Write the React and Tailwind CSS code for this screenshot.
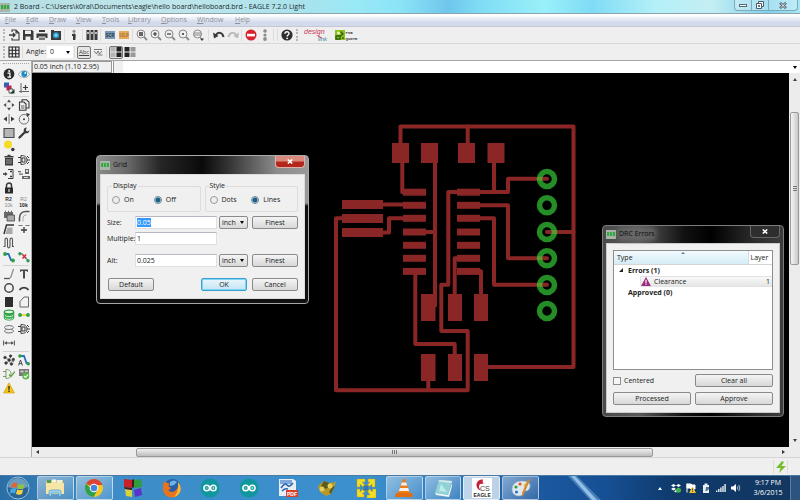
import { useEffect, useRef, useState } from 'react';

const INK = '#3a3a3a';
const LEAF = '#2f9e44';

// every glyph below is drawn on a 12 x 12 grid
const GLYPHS = {
  export: (
    <g fill="none" stroke={INK} strokeWidth="1.1">
      <path d="M4 3V1h4l3 3v7H4V9M8 1v3h3" />
      <path d="M1 6h6M5 4l2 2-2 2" strokeWidth="1.3" />
    </g>
  ),
  save: (
    <g>
      <path d="M1 1h9l1.5 1.5V11H1z" fill={INK} />
      <path d="M3 1.5h6v3.5H3zM3.5 7.5h5V11h-5z" fill="#eee" />
    </g>
  ),
  print: (
    <g fill={INK}>
      <path d="M3 1h6v2H3zM0.5 4.5h11V9h-2V7.5h-7V9h-2z" />
      <path d="M3 8.5h6V11H3z" fill="#777" />
    </g>
  ),
  camera: (
    <g>
      <path d="M1 2h10v9H1z" fill={INK} />
      <path d="M1 1h3v1H1z" fill={INK} />
      <circle cx="6" cy="6.3" r="3" fill="#2aa5dc" />
      <circle cx="6" cy="6.3" r="1.3" fill="#8fd8f5" />
    </g>
  ),
  switchBoard: (
    <g fill={INK}>
      <circle cx="6" cy="2.2" r="1.5" fill="#888" />
      <path d="M4 5l3-.5.8 1.5-.5 5H5V7H4z" />
    </g>
  ),
  books: (
    <g fill={INK}>
      <path d="M.5 1h3v10h-3zM4.5 1h3v10h-3zM8.5 1h3v10h-3z" />
      <path d="M1.3 3h1.4v2H1.3zM5.3 3h1.4v2H5.3zM9.3 3h1.4v2H9.3z" fill="#eee" />
    </g>
  ),
  zoomFit: (
    <g fill="none" stroke="#8a8a8a">
      <circle cx="5" cy="5" r="4" />
      <path d="M3 4h4M3 6h4" stroke={INK} strokeWidth="1.4" />
      <path d="M8 8l3 3" strokeWidth="1.8" />
    </g>
  ),
  zoomIn: (
    <g fill="none" stroke="#8a8a8a">
      <circle cx="5" cy="5" r="4" />
      <path d="M3 5h4M5 3v4" stroke={INK} strokeWidth="1.2" />
      <path d="M8 8l3 3" strokeWidth="1.8" />
    </g>
  ),
  zoomOut: (
    <g fill="none" stroke="#8a8a8a">
      <circle cx="5" cy="5" r="4" />
      <path d="M3 5h4" stroke={INK} strokeWidth="1.2" />
      <path d="M8 8l3 3" strokeWidth="1.8" />
    </g>
  ),
  zoomRedraw: (
    <g fill="none" stroke="#8a8a8a">
      <circle cx="5" cy="5" r="4" />
      <circle cx="5" cy="5" r="1.1" fill={INK} stroke="none" />
      <path d="M8 8l3 3" strokeWidth="1.8" />
    </g>
  ),
  zoomSelect: (
    <g fill="none" stroke="#8a8a8a">
      <circle cx="5.5" cy="5" r="4" />
      <path d="M2 4h7M2 6h7M8 8l2 2" />
      <path d="M8 9.5h4L10 12z" fill={INK} stroke="none" />
    </g>
  ),
  undo: (
    <g>
      <path d="M2.5 6.5C5 2.5 9.5 3 10.5 8" fill="none" stroke={INK} strokeWidth="2" />
      <path d="M0 3.5l1 6 4.5-2.5z" fill={INK} />
    </g>
  ),
  redo: (
    <g>
      <path d="M9.5 6.5C7 2.5 2.5 3 1.5 8" fill="none" stroke="#b9b9b9" strokeWidth="2" />
      <path d="M12 3.5l-1 6-4.5-2.5z" fill="#b9b9b9" />
    </g>
  ),
  stop: (
    <g>
      <circle cx="6" cy="6" r="5.5" fill="#d8232f" />
      <path d="M2 4.8h8v2.6H2z" fill="#fff" />
    </g>
  ),
  traffic: (
    <g fill="#8c8c8c">
      <circle cx="6" cy="2" r="1.8" />
      <circle cx="6" cy="6" r="1.6" />
      <circle cx="6" cy="10" r="1.9" />
    </g>
  ),
  help: (
    <g>
      <circle cx="6" cy="6" r="5.6" fill="#2f2f2f" />
      <path d="M4 4.8C4 2 8.2 2.2 8 4.6 8 6 6.1 6 6.1 7.4" fill="none" stroke="#fff" strokeWidth="1.4" />
      <circle cx="6.1" cy="9.3" r=".9" fill="#fff" />
    </g>
  ),
  info: (
    <g>
      <circle cx="6" cy="6" r="5.4" fill="#2b2b2b" />
      <path d="M4.5 5.2h2.4V9h1M4.5 9.2H8" fill="none" stroke="#fff" strokeWidth="1.2" />
      <circle cx="6.2" cy="2.9" r="1" fill="#fff" />
    </g>
  ),
  eye: (
    <g>
      <path d="M.5 6.5C3 1.5 9.500 1.500 11.500 6.500 9 10.500 3 10.500 .5 6.500z" fill="#fff" stroke="#8d9aa3" strokeWidth=".9" />
      <circle cx="6.3" cy="6" r="3" fill="#1e8cc4" />
      <circle cx="7.3" cy="5" r="1" fill="#d8f1ff" />
    </g>
  ),
  layers: (
    <g>
      <path d="M1 .5h5v5H1z" fill="#2f62b5" />
      <path d="M3.5 3.5h5v5h-5z" fill="#c02552" />
      <path d="M6 7h4v4H6z" fill="#eee" stroke={INK} strokeWidth=".8" />
      <path d="M11.5 7v4.5H7z" fill="#20402a" />
    </g>
  ),
  mark: (
    <g fill="none" stroke="#666">
      <path d="M3 1v10M1 9.5h10" />
      <path d="M7.5 3v5M5 5.5h5" stroke={INK} strokeWidth="1.2" />
    </g>
  ),
  move: (
    <path d="M6 0.5l2 2.700H4zM6 11.500l2-2.700H4zM.5 6l2.700-2v4zM11.500 6L8.800 4v4z" fill="#4a4a4a" />
  ),
  copy: (
    <g fill="#eee" stroke={INK} strokeWidth="1.1">
      <path d="M4 .8h4.500L11 3v6H4z" />
      <path d="M1.5 3H6l2 2v6.200H1.500z" />
      <path d="M3 7h3.500M3 9h3.500" strokeWidth=".8" />
    </g>
  ),
  mirror: (
    <g fill={INK}>
      <path d="M.5 6L4 3.500v5zM11.500 6L8 3.500v5z" />
      <path d="M5.600 1h.9v10h-.9z" fill="#666" />
    </g>
  ),
  rotate: (
    <g>
      <circle cx="6" cy="6.3" r="4.800" fill="none" stroke="#666" strokeWidth=".9" />
      <circle cx="6" cy="6.3" r="1" fill={INK} />
      <path d="M8 0l4 1-2.500 3z" fill={INK} />
    </g>
  ),
  group: <path d="M1 1.500h10v9H1z" fill="#b5b5b5" stroke="#4a4a4a" strokeWidth="1.100" />,
  wrench: (
    <g>
      <path d="M1.500 10.500L7 5" stroke={INK} strokeWidth="2.400" strokeLinecap="round" />
      <path d="M11.500 3.200L9.600 4.600 7.700 3.300 8.800.6C5.500.5 5 4 6.500 5.700c2 1.500 5 .3 5-2.500z" fill={INK} />
    </g>
  ),
  cut: (
    <g>
      <circle cx="5" cy="4.5" r="4" fill="#f7da28" />
      <circle cx="9.8" cy="9.5" r="1.8" fill={INK} />
    </g>
  ),
  trash: (
    <g>
      <path d="M1.500 2h9v1.500h-9zM4.500.8h3V2h-3zM2 4h8v7.500H2z" fill={INK} />
      <path d="M4 5v5M6 5v5M8 5v5" stroke="#bbb" strokeWidth=".8" />
    </g>
  ),
  gate: (
    <g fill="none" stroke={INK}>
      <path d="M0 3.500h3M0 8.500h3M9 6h3M3 1.500v9c4 0 6-1.500 6-4.500S7 1.500 3 1.500z" />
      <path d="M4 4h3v4H4zM9 2l2 2M9 10l2-2" />
    </g>
  ),
  pinswap: (
    <g fill="none" stroke={INK}>
      <path d="M5 1.500h5v9H5" />
      <path d="M0 6h2M7 3.500h2M7 8.500h2" strokeWidth="1.400" />
      <path d="M2 4l2.500 2L2 8z" fill={INK} stroke="none" />
    </g>
  ),
  replace: (
    <g fill="#666">
      <path d="M7 1h4v5H7zM4 8h8v3H4z" />
      <path d="M0 3h3v1.300H0zM1 5.500h4v1.300H1z" />
      <path d="M8 2h2v2H8zM6 9h4v1H6z" fill="#ddd" />
    </g>
  ),
  lock: (
    <g>
      <path d="M3.500 6V3.500a2.500 2.500 0 015 0V6" fill="none" stroke={INK} strokeWidth="1.500" />
      <path d="M2 5.500h8V11.500H2z" fill="#2b2b2b" />
      <path d="M5.400 7h1.200v3H5.400z" fill="#ddd" />
    </g>
  ),
  smash: (
    <g fill="#6a6a6a">
      <path d="M1 2h9v6H1z" />
      <path d="M2 .8h1v2H2zM5 .8h1v2H5zM8 .8h1v2H8z" />
      <path d="M4 5h7.500v6H4z" fill="#aaa" stroke="#444" strokeWidth=".8" />
    </g>
  ),
  miter: (
    <g fill="none">
      <path d="M1.500 11.500V8C1.500 4 4 1.500 8 1.500h3.500" stroke="#555" strokeWidth="1.600" />
      <path d="M5 11.500V8.500C5 6 6 5 8.500 5" stroke="#aaa" />
    </g>
  ),
  split: (
    <g fill="none">
      <path d="M1 11l2.500-9H11" stroke="#333" strokeWidth="1.500" />
      <path d="M4.500 4.500h5V11H2.500z" fill="#aaa" />
    </g>
  ),
  optimize: (
    <g fill="none" stroke="#777">
      <path d="M.5 2.500h4M7.500 2.500h4" />
      <path d="M6 4v6M3 7h6" strokeWidth="1.300" stroke={INK} />
    </g>
  ),
  meander: <path d="M.5 9.500h1.500V3c0-2.500 2.500-2.500 2.500 0v6c0 2.500 2.500 2.500 2.500 0V3c0-2.500 2.500-2.500 2.500 0v6.500H11" fill="none" stroke="#555" strokeWidth="1.100" />,
  route: (
    <g>
      <path d="M2 3h3.500L8 9h2" fill="none" stroke="#2b6fc0" strokeWidth="1.900" />
      <circle cx="2" cy="3" r="1.9" fill={LEAF} />
      <circle cx="10" cy="9.5" r="1.9" fill={LEAF} />
    </g>
  ),
  ripup: (
    <g>
      <path d="M2 3h3M7 6l3 3.500" stroke="#7a8fd0" strokeWidth="1.300" />
      <circle cx="1.9" cy="2.7" r="1.7" fill={LEAF} />
      <circle cx="10" cy="9.7" r="1.7" fill={LEAF} />
      <path d="M4.500 3.500l3.500 4M8 3.500l-3.500 4" stroke="#d0312f" strokeWidth="1.500" />
    </g>
  ),
  wire: (
    <g fill="none">
      <path d="M1 10.500h6" stroke="#555" strokeWidth="1.300" />
      <path d="M7.500 10L10.500 1" stroke="#888" strokeWidth="1.200" />
    </g>
  ),
  text: <path d="M2 1.500h8v2.300H8.800L8.600 3H7v7.500H5V3H3.400l-.2.800H2z" fill="#4a4a4a" />,
  circle: <circle cx="6" cy="6" r="4.200" fill="none" stroke="#4a4a4a" strokeWidth="1.500" />,
  arc: <path d="M1.500 8C3.500 4.800 8.500 4.800 10.500 8" fill="none" stroke="#3f3f3f" strokeWidth="1.900" />,
  rect: <path d="M2 1h8v10H2z" fill="#2e2e2e" />,
  polygon: <path d="M2 5.500L6 1h4.500v10H2z" fill="none" stroke="#666" />,
  via: (
    <g stroke="#2f9e44">
      <path d="M1.300 3v6c0 2.700 9.400 2.700 9.400 0V3" fill="#3fae52" />
      <path d="M1.800 6.300c1 1.800 7.400 1.800 8.400 0M1.800 9c1 1.800 7.400 1.800 8.400 0" fill="none" stroke="#c7ecd0" />
      <ellipse cx="6" cy="3" rx="4.700" ry="1.800" fill="#e4f6e8" strokeWidth="1.300" />
    </g>
  ),
  signal: (
    <g>
      <path d="M2 6h8" stroke="#e0cf2c" strokeWidth="1.700" />
      <circle cx="2" cy="6" r="1.9" fill={LEAF} />
      <circle cx="10" cy="6" r="1.9" fill={LEAF} />
    </g>
  ),
  hole: (
    <g fill="#eee" stroke="#777">
      <ellipse cx="6" cy="8" rx="4.500" ry="2" />
      <ellipse cx="6" cy="4.500" rx="4.500" ry="2" />
    </g>
  ),
  dimension: (
    <g fill="none" stroke="#555">
      <path d="M.6 3.500v5M11.400 3.500v5M3 6h6" />
      <path d="M1 6l3-1.800v3.600zM11 6L8 4.200v3.600z" fill="#555" stroke="none" />
    </g>
  ),
  ratsnest: (
    <g fill={INK} stroke={INK} strokeWidth=".6">
      <path d="M6 6L2 3M6 6l3-5M6 6l5 2M6 6L3 10.500M6 6l2 5" />
      <circle cx="6" cy="6" r="1.3" />
      <circle cx="2" cy="3.5" r="1.3" />
      <circle cx="7.5" cy="2" r="1.2" />
      <circle cx="10.3" cy="5.5" r="1.3" />
      <circle cx="3" cy="9" r="1.3" />
      <circle cx="8.5" cy="10" r="1.3" />
    </g>
  ),
  autoroute: (
    <g>
      <path d="M2 2h4l2.500 7H10" fill="none" stroke="#2b6fc0" strokeWidth="1.800" />
      <circle cx="2" cy="2" r="1.8" fill={LEAF} />
      <circle cx="10.2" cy="9.7" r="1.8" fill={LEAF} />
      <path d="M.5 11.500L2.500 6l2 5.500M1.200 9.700h2.600" fill="none" stroke={INK} strokeWidth=".9" />
    </g>
  ),
  erc: (
    <g fill="none" stroke="#7d9b62">
      <path d="M0 3.500h3M0 8.500h3M3 1.500v9c4 0 5-2 5-4.500S7 1.500 3 1.500z" />
      <path d="M6 6.500l2 2 4-5" stroke="#58a83c" strokeWidth="1.300" />
    </g>
  ),
  drc: (
    <g>
      <path d="M1 1h10v7H1z" fill="#777" />
      <path d="M2.500 2.500h3v2h-3zM7 2.500h3v1.500H7z" fill="#ccc" />
      <circle cx="7.8" cy="8" r="3.5" fill="#5cb648" />
      <path d="M6 8l1.500 1.500L10 6.700" fill="none" stroke="#fff" strokeWidth="1.100" />
    </g>
  ),
  warning: (
    <g>
      <path d="M6 .8L11.500 11H.5z" fill="#f4c21c" stroke="#d9a514" strokeWidth=".7" strokeLinejoin="round" />
      <path d="M5.300 4h1.400v3.800H5.300zM5.300 8.600h1.400V10H5.300z" fill="#333" />
    </g>
  ),
  grid: (
    <path d="M1 1h10v10H1zM4.300 1v10M7.700 1v10M1 4.300h10M1 7.700h10" fill="none" stroke="#222" strokeWidth="1.100" />
  ),
  wiggle: (
    <g fill="none" stroke="#666" strokeWidth=".9">
      <path d="M2 3.500h8M2 5l2.500 3L6 5l1.500 3L10 5M5.500 9h5" />
    </g>
  ),
  tilesA: (
    <g>
      <path d="M.5 1h5v4.500h-5zM.5 6.500h5V11h-5z" fill="#b5b5b5" />
      <path d="M6.500 1h5v4.500h-5zM6.500 6.500h5V11h-5z" fill="#222" />
    </g>
  ),
  tilesB: (
    <g>
      <path d="M.5 1h5v4.500h-5zM.5 6.500h5V11h-5z" fill="#222" />
      <path d="M6.500 1h5v4.500h-5zM6.500 6.500h5V11h-5z" fill="#999" />
    </g>
  ),
};

function Glyph({ name, className = 'size-3' }) {
  return (
    <svg viewBox="0 0 12 12" className={className} aria-hidden="true">
      {GLYPHS[name]}
    </svg>
  );
}

function ToolButton({ name }) {
  return (
    <button type="button" aria-label={name} className="flex w-3.5 shrink-0 items-center justify-center">
      <Glyph name={name} />
    </button>
  );
}

function Sep({ wide = false }) {
  return <span className={`${wide ? 'mx-[3px]' : 'mr-0.5 ml-px'} h-3 w-px bg-[#dcdcdc]`} />;
}

function Grip() {
  return <span className="mx-0.5 h-3 w-0.5 border-l-2 border-dotted border-[#b8b8b8]" />;
}

function AppIcon() {
  return (
    <span className="flex h-[9px] w-2.5 shrink-0 items-center justify-center bg-[#a9b5a9]">
      <span className="h-1 w-2 bg-[repeating-linear-gradient(90deg,#3aa648_0_2px,#79bd80_2px_3px)]" />
    </span>
  );
}

function TitleBar() {
  return (
    <header className="flex h-3.5 items-start justify-between border-b border-[#8fa3ad] bg-[linear-gradient(90deg,#b5dfe4_0%,#bfe6ea_22%,#a9e2ec_38%,#9be9f6_44%,#8be4f6_50%,#6fc6ec_56%,#7fdcf5_60%,#9af0fa_68%,#7fdcf5_74%,#b4f0f8_82%,#c4eef3_89%,#7fd0ee_96%,#a7e6f5_100%)]">
      <div className="flex h-3 items-center gap-1 pt-0.5">
        <AppIcon />
        <h1 className="text-[7px] leading-[10px] whitespace-nowrap text-[#1d2a30]">
          2 Board - C:\Users\k0ral\Documents\eagle\hello board\helloboard.brd - EAGLE 7.2.0 Light
        </h1>
      </div>
      <div className="mr-0.5 flex h-[11px] divide-x divide-[#7fa9b5] rounded-b border border-t-0 border-[#7fa9b5] bg-white/30">
        <button type="button" aria-label="Minimize" className="flex w-[17px] items-center justify-center">
          <span className="h-[3px] w-2 border border-[#5a6a75] bg-white" />
        </button>
        <button type="button" aria-label="Restore" className="flex w-[17px] items-center justify-center">
          <svg viewBox="0 0 8 8" className="size-2">
            <path d="M2.500.5h5v5h-5z" fill="#fff" stroke="#4d5a66" />
            <path d="M.5 2.500h5v5h-5z" fill="#fff" stroke="#4d5a66" />
            <path d="M2.500 4.500h1v1h-1z" stroke="#4d5a66" />
          </svg>
        </button>
        <button type="button" aria-label="Close" className="flex w-7 items-center justify-center">
          <svg viewBox="0 0 8 7" className="h-[7px] w-2">
            <path d="M1 .8l6 5.400M7 .8L1 6.200" stroke="#4d5a66" strokeWidth="2.400" />
            <path d="M1.500 1.200l5 4.600M6.500 1.200l-5 4.600" stroke="#fff" strokeWidth=".9" />
          </svg>
        </button>
      </div>
    </header>
  );
}

const MENUS = [
  ['File', 'w-[21px]'],
  ['Edit', 'w-[23px]'],
  ['Draw', 'w-[27px]'],
  ['View', 'w-[26px]'],
  ['Tools', 'w-[26px]'],
  ['Library', 'w-[33px]'],
  ['Options', 'w-9'],
  ['Window', 'w-[38px]'],
  ['Help', 'w-6'],
];

function MenuBar() {
  return (
    <nav className="flex h-[13px] items-center border-b border-[#c3c8d4] bg-linear-to-b from-white from-10% to-[#d3daec] to-70% pl-[5px]">
      {MENUS.map(([label, width]) => (
        <button key={label} type="button" className={`${width} text-left text-[7px] leading-[10px] text-[#8d9098]`}>
          <span className="underline">{label[0]}</span>
          {label.slice(1)}
        </button>
      ))}
    </nav>
  );
}

function FileTag({ label, className }) {
  return (
    <button type="button" className="flex w-3.5 shrink-0 items-center justify-center">
      <span className={`${className} flex h-2 w-2.5 items-center justify-center text-[5px] leading-[8px] font-bold`}>{label}</span>
    </button>
  );
}

function MainToolbar() {
  return (
    <div className="flex h-[17px] items-center border-b border-[#d8d8d8] bg-[#efefef] pl-px">
      <Grip />
      <ToolButton name="export" />
      <ToolButton name="save" />
      <ToolButton name="print" />
      <ToolButton name="camera" />
      <Sep />
      <ToolButton name="switchBoard" />
      <Sep />
      <ToolButton name="books" />
      <Sep />
      <FileTag label="SCR" className="bg-[#7b97b3] text-[#2c4156]" />
      <FileTag label="ULP" className="bg-[#e5a95a] text-[#a9762e]" />
      <Sep />
      <ToolButton name="zoomFit" />
      <ToolButton name="zoomIn" />
      <ToolButton name="zoomOut" />
      <ToolButton name="zoomRedraw" />
      <ToolButton name="zoomSelect" />
      <Sep wide />
      <ToolButton name="undo" />
      <ToolButton name="redo" />
      <Sep />
      <ToolButton name="stop" />
      <ToolButton name="traffic" />
      <Sep />
      <Sep />
      <ToolButton name="help" />
      <Grip />
      <button type="button" aria-label="Design Link" className="ml-1">
        <svg viewBox="0 0 26 16" className="h-4 w-[26px]">
          <text x="0" y="7" fontSize="7" fontStyle="italic" fill="#c8385a" fontFamily="Liberation Sans">design</text>
          <text x="14" y="14" fontSize="6" fontStyle="italic" fill="#3a7fa0" fontFamily="Liberation Sans">link</text>
          <path d="M14 9l4 2" stroke="#c8385a" />
        </svg>
      </button>
      <button type="button" aria-label="PCB Quote" className="ml-[5px]">
        <svg viewBox="0 0 24 12" className="h-3 w-6">
          <path d="M0 1h10v10H0z" fill="#8cc21e" />
          <path d="M1 7h4v3H1zM5.500 2.500L8 5 5.500 7M8 8v2" fill="none" stroke="#2f5a12" strokeWidth="1.300" />
          <circle cx="3.5" cy="4" r="1.5" fill="#e6f5c0" />
          <text x="10.5" y="5" fontSize="4" fontWeight="700" fill="#444" fontFamily="Liberation Mono">PCB</text>
          <text x="10.5" y="10.5" fontSize="4" fontWeight="700" fill="#444" fontFamily="Liberation Mono">QUOTE</text>
        </svg>
      </button>
    </div>
  );
}

function ParameterToolbar() {
  return (
    <div className="flex h-[17px] items-center border-b border-[#a5a5a5] bg-[#efefef] pl-px">
      <Grip />
      <ToolButton name="grid" />
      <Sep />
      <label htmlFor="angle" className="ml-px text-[7px] leading-[10px]">Angle:</label>
      <div className="relative ml-px">
        <select id="angle" defaultValue="0" className="h-3 w-[26px] appearance-none bg-white pl-[3px] text-[7px] leading-[12px]">
          <option>0</option>
          <option>45</option>
          <option>90</option>
        </select>
        <span className="pointer-events-none absolute top-[5px] right-[3px] border-x-2 border-t-[3px] border-x-transparent border-t-black" />
      </div>
      <Sep />
      <button type="button" className="flex h-[13px] w-3.5 items-center justify-center rounded-xs border border-[#777] bg-[#e4e4e4] text-[6px] leading-[8px] text-[#444] underline">
        Abc
      </button>
      <ToolButton name="wiggle" />
      <Sep />
      <span className="flex h-[13px] items-center rounded-xs border border-[#777] bg-[#e4e4e4]">
        <Glyph name="tilesA" />
      </span>
      <ToolButton name="tilesB" />
    </div>
  );
}

const PALETTE = [
  [
    ['info', 'eye'],
    ['layers', 'mark'],
  ],
  [
    ['move', 'copy'],
    ['mirror', 'rotate'],
    ['group', 'wrench'],
    ['cut', null],
    ['trash', 'gate'],
    ['pinswap', 'replace'],
    ['lock', null],
    ['name', 'value'],
    ['smash', 'miter'],
    ['split', 'optimize'],
    ['meander', null],
    ['route', 'ripup'],
  ],
  [
    ['wire', 'text'],
    ['circle', 'arc'],
    ['rect', 'polygon'],
    ['via', 'signal'],
    ['hole', 'gate'],
    ['dimension', null],
  ],
  [
    ['ratsnest', 'autoroute'],
    ['erc', 'drc'],
    ['warning', null],
  ],
];

const PALETTE_HEIGHT = ['h-7', 'h-[166px]', 'h-[83px]', 'h-[42px]'];

function PaletteCell({ name }) {
  if (!name) return <span />;
  if (name === 'name' || name === 'value') {
    return (
      <button
        type="button"
        aria-label={name}
        className="flex flex-col items-center justify-center font-['Liberation_Sans',sans-serif] text-[5px] leading-[6px]"
      >
        <span className={name === 'name' ? 'font-bold text-[#333]' : 'text-[#888]'}>R2</span>
        <span className={name === 'name' ? 'text-[#888]' : 'font-bold text-[#222]'}>10k</span>
      </button>
    );
  }
  return (
    <button type="button" aria-label={name} className="flex items-center justify-center">
      <Glyph name={name} />
    </button>
  );
}

function Palette() {
  return (
    <aside className="flex w-[31px] shrink-0 flex-col bg-[#f1f1f1] pl-px">
      <span className="mx-0.5 mt-0.5 mb-[3px] border-t border-dotted border-[#a8a8a8]" />
      {PALETTE.map((rows, i) => (
        <div key={i}>
          {i > 0 && <hr className="mx-0.5 my-px border-[#d2d2d2]" />}
          <div className={`${PALETTE_HEIGHT[i]} grid auto-rows-fr grid-cols-2`}>
            {rows.flat().map((name, j) => (
              <PaletteCell key={j} name={name} />
            ))}
          </div>
        </div>
      ))}
    </aside>
  );
}

// traces and pads in board-view pixels: pads are [x, y, w, h]
const TRACES = [
  'M400.5 145V126.5H573.5V367H485',
  'M467.7 126.5V145',
  'M402.3 160V192.3H410',
  'M380 204.5H406',
  'M380 232.5H389V218.3H406',
  'M345 218.3H336V390.2H467.7V331H441.3V284.7H448.3V192H460',
  'M435 160V305.5',
  'M424 232H435',
  'M415.3 272V344H454.7V356',
  'M428.3 378V390',
  'M460 258.3H454.7V297',
  'M476 271.3H481V297',
  'M478 192H508V178.7H547',
  'M494 160V192',
  'M478 205.3H508V258.3H547',
  'M478 218.3H494V284.7H547',
  'M547 232H573.5',
];

const PADS = [
  [392, 143, 17, 20],
  [421, 143, 17, 20],
  [458, 143, 17, 20],
  [487.5, 143, 17, 20],
  [342, 200, 41, 9],
  [342, 214, 41, 9],
  [342, 228, 41, 9],
  [421, 294, 14.5, 27],
  [448, 294, 14, 27],
  [474, 294, 14, 27],
  [421, 354, 14.5, 27],
  [448, 354, 14, 27],
  [474, 354, 14, 27],
];

const PIN_ROWS = [192.2, 205.3, 218.3, 232, 245.3, 258.3, 271.4];
const HOLES = [179, 205.3, 232, 258.3, 285, 311];

function Board() {
  return (
    <svg viewBox="32 73 757 374" preserveAspectRatio="xMinYMin meet" className="size-full" aria-label="helloboard.brd">
      <g fill="none" stroke="#8b2626" strokeWidth="4" strokeLinejoin="round" strokeLinecap="round">
        {TRACES.map((d) => (
          <path key={d} d={d} />
        ))}
      </g>
      <g fill="#8b2626">
        {PADS.map(([x, y, w, h]) => (
          <rect key={`${x}-${y}`} x={x} y={y} width={w} height={h} />
        ))}
        {PIN_ROWS.map((y) => (
          <g key={y}>
            <rect x="403" y={y - 3.5} width="23" height="7" />
            <rect x="457" y={y - 3.5} width="23" height="7" />
          </g>
        ))}
      </g>
      <g fill="none" stroke="#39d839" strokeOpacity=".65" strokeWidth="5.5">
        {HOLES.map((y) => (
          <circle key={y} cx="547" cy={y} r="7.5" />
        ))}
      </g>
    </svg>
  );
}

function PushButton({ children, className = '', primary = false }) {
  return (
    <button
      type="button"
      className={`${className} h-[13px] rounded-xs border text-center text-[7px] leading-[11px] text-[#222] ${
        primary
          ? 'border-[#3c9fd0] bg-linear-to-b from-[#eaf6fc] to-[#c3e4f4] shadow-[inset_0_0_0_1px_#7fd3f4]'
          : 'border-[#8a8a8a] bg-linear-to-b from-[#f4f4f4] to-[#d8d8d8]'
      }`}
    >
      {children}
    </button>
  );
}

function Radio({ name, label, checked, onChange }) {
  return (
    <label className="flex items-center gap-1 text-[7px] leading-[10px]">
      <input
        type="radio"
        name={name}
        checked={checked}
        onChange={onChange}
        className="size-2 appearance-none rounded-full border border-[#999] bg-[#eee] checked:border-[#6d8796] checked:bg-[radial-gradient(circle,#1c5f88_0_2px,#cfe4ee_3px)]"
      />
      {label}
    </label>
  );
}

function UnitSelect({ id }) {
  return (
    <div className="relative">
      <select
        id={id}
        aria-label="Unit"
        defaultValue="inch"
        className="block h-[13px] w-full appearance-none rounded-xs border border-[#8a8a8a] bg-linear-to-b from-[#f4f4f4] to-[#d8d8d8] pl-0.5 text-[7px] leading-[11px] text-[#222]"
      >
        <option>inch</option>
        <option>mm</option>
        <option>mil</option>
      </select>
      <span className="pointer-events-none absolute top-[5px] right-1 border-x-2 border-t-[3px] border-x-transparent border-t-black" />
    </div>
  );
}

const FIELD = 'h-[13px] w-full border border-[#dcdfe4] border-t-[#b5b9c2] bg-white px-px text-[7px] leading-[11px] outline-none';

function GridDialog() {
  const [display, setDisplay] = useState('Off');
  const [style, setStyle] = useState('Lines');
  const sizeRef = useRef(null);

  useEffect(() => {
    sizeRef.current.focus();
    sizeRef.current.select();
  }, []);

  return (
    <section
      role="dialog"
      aria-label="Grid"
      className="absolute top-[82px] left-16 w-[213px] rounded border border-[#a9a9a9] bg-[linear-gradient(180deg,transparent_0_32%,#111_34%),linear-gradient(90deg,#8a8a8a_0%,#6b6b6b_14%,#262626_30%,#0a0a0a_50%,#3a3a3a_64%,#8b8b8b_85%,#999_100%)] px-[3px] pb-1"
    >
      <div className="flex h-[18px] items-start justify-between">
        <div className="flex items-center gap-[3px] pt-1">
          <AppIcon />
          <h2 className="text-[7px] leading-[10px] text-[#111]">Grid</h2>
        </div>
        <button type="button" aria-label="Close" className="flex h-3 w-[30px] items-center justify-center rounded-b border border-t-0 border-[#e0b0a8] bg-linear-to-b from-[#d98a7c] from-45% to-[#b3261b] to-55%">
          <svg viewBox="0 0 6 5" className="h-[5px] w-1.5">
            <path d="M.8.5l4.400 4M5.200.5L.8 4.500" stroke="#fff" strokeWidth="1.600" />
          </svg>
        </button>
      </div>
      <div className="border border-[#ddd] bg-[#f0f0f0] px-1.5 pt-1.5 pb-[7px]">
        <div className="flex gap-1">
          <fieldset className="h-[31px] flex-1 rounded-xs border border-[#dcdcdc] px-1 pb-1">
            <legend className="px-px text-[7px] leading-[10px]">Display</legend>
            <div className="grid grid-cols-2 pt-1">
              {['On', 'Off'].map((v) => (
                <Radio key={v} name="display" label={v} checked={display === v} onChange={() => setDisplay(v)} />
              ))}
            </div>
          </fieldset>
          <fieldset className="h-[31px] flex-1 rounded-xs border border-[#dcdcdc] px-1 pb-1">
            <legend className="text-[7px] leading-[10px]">Style</legend>
            <div className="grid grid-cols-2 pt-1">
              {['Dots', 'Lines'].map((v) => (
                <Radio key={v} name="style" label={v} checked={style === v} onChange={() => setStyle(v)} />
              ))}
            </div>
          </fieldset>
        </div>
        <div className="mt-1 grid grid-cols-[26px_1fr_29px_48px] items-center gap-x-0.5 text-[7px] leading-[10px]">
          <label htmlFor="size">Size:</label>
          <input id="size" ref={sizeRef} defaultValue="0.05" className={`${FIELD} selection:bg-[#3399ff] selection:text-white`} />
          <UnitSelect id="size-unit" />
          <PushButton className="ml-0.5">Finest</PushButton>
          <label htmlFor="multiple" className="mt-[3px] whitespace-nowrap">Multiple:</label>
          <input id="multiple" defaultValue="1" className={`${FIELD} mt-[3px]`} />
          <span />
          <span />
          <label htmlFor="alt" className="mt-[9px]">Alt:</label>
          <input id="alt" defaultValue="0.025" className={`${FIELD} mt-[9px]`} />
          <div className="mt-[9px]">
            <UnitSelect id="alt-unit" />
          </div>
          <PushButton className="mt-[9px] ml-0.5">Finest</PushButton>
        </div>
        <div className="mt-[11px] flex gap-[5px]">
          <PushButton className="mr-auto ml-px w-[46px]">Default</PushButton>
          <PushButton className="w-[46px]" primary>OK</PushButton>
          <PushButton className="w-[46px]">Cancel</PushButton>
        </div>
      </div>
    </section>
  );
}

function DrcDialog() {
  return (
    <section
      role="dialog"
      aria-label="DRC Errors"
      className="absolute top-[152px] right-[5px] w-[182px] rounded border border-[#7c7c7c] bg-[linear-gradient(90deg,#4a4a4a_0%,#5a5a5a_20%,#111_45%,#000_60%,#2e2e2e_85%,#3d3d3d_100%)] px-[3px] pb-[3px]"
    >
      <div className="flex h-[17px] items-start justify-between">
        <div className="flex items-center gap-[3px] pt-[3px]">
          <AppIcon />
          <h2 className="rounded bg-[#6f6f6f]/60 text-[7px] leading-[10px] text-[#0c0c0c] shadow-[0_0_4px_2px_#6f6f6f99]">DRC Errors</h2>
        </div>
        <button type="button" aria-label="Close" className="flex h-3 w-[30px] items-center justify-center rounded-b border border-t-0 border-[#666] bg-[#2e2e2e]">
          <svg viewBox="0 0 6 5" className="h-[5px] w-1.5">
            <path d="M.8.5l4.400 4M5.200.5L.8 4.500" stroke="#fff" strokeWidth="1.600" />
          </svg>
        </button>
      </div>
      <div className="border border-[#ccc] bg-[#f0f0f0] px-1.5 pt-1.5 pb-[7px]">
        <div className="h-[120px] border border-[#8e8e8e] bg-white">
          <table className="w-full table-fixed text-[7px] leading-[11px]">
            <thead>
              <tr className="h-[13px] border-b border-[#d5d5d5]">
                <th className="relative bg-linear-to-b from-[#f2fafd] to-[#d5ecf6] pl-[3px] text-left font-normal">
                  Type
                  <span className="absolute top-px left-1/2 border-x-2 border-b-2 border-x-transparent border-b-[#5a7d90]" />
                </th>
                <th className="w-6 border-l border-[#c8dfe9] pl-0.5 text-left font-normal">Layer</th>
              </tr>
            </thead>
            <tbody>
              <tr>
                <th colSpan={2} scope="row" className="pl-[5px] text-left font-bold">
                  <span className="flex items-center gap-[5px]">
                    <svg viewBox="0 0 4 4" className="size-1">
                      <path d="M4 0v4H0z" fill="#222" />
                    </svg>
                    Errors (1)
                  </span>
                </th>
              </tr>
              <tr>
                <td className="py-0 pr-0 pl-[26px]">
                  <span className="flex items-center gap-[3px] rounded-l-xs border-y border-l border-[#e2e2e2] bg-linear-to-b from-[#f8f8f8] to-[#e6e6e6] leading-[9px]">
                    <svg viewBox="0 0 12 11" className="h-[9px] w-2.5">
                      <path d="M6 0l6 11H0z" fill="#9b2a7c" />
                      <path d="M5.300 3.500h1.400V7.500H5.300zM5.300 8.300h1.400V9.600H5.300z" fill="#fff" />
                    </svg>
                    Clearance
                  </span>
                </td>
                <td className="p-0">
                  <span className="block border-y border-[#e2e2e2] bg-linear-to-b from-[#f8f8f8] to-[#e6e6e6] pr-0.5 text-right leading-[9px]">1</span>
                </td>
              </tr>
              <tr>
                <th colSpan={2} scope="row" className="pl-3.5 text-left font-bold">Approved (0)</th>
              </tr>
            </tbody>
          </table>
        </div>
        <div className="mt-1 grid grid-cols-2 items-center gap-x-1 gap-y-[5px]">
          <label className="flex items-center gap-[3px] text-[7px] leading-[10px]">
            <input type="checkbox" className="size-2 appearance-none border border-[#8e8e8e] bg-[#f6f6f6] checked:bg-[#2a6e9a]" />
            Centered
          </label>
          <PushButton>Clear all</PushButton>
          <PushButton>Processed</PushButton>
          <PushButton>Approve</PushButton>
        </div>
      </div>
    </section>
  );
}

function VerticalScrollbar() {
  return (
    <div className="flex w-[11px] shrink-0 flex-col items-center bg-[#ececec]">
      <span className="mt-[5px] border-x-2 border-b-[3px] border-x-transparent border-b-[#444]" />
      <span className="mt-[31px] flex h-[41%] w-[9px] flex-col items-center justify-center gap-px rounded-xs border border-[#999] bg-linear-to-r from-[#f5f5f5] to-[#c9c9c9]">
        <span className="h-px w-1 bg-[#777]" />
        <span className="h-px w-1 bg-[#777]" />
        <span className="h-px w-1 bg-[#777]" />
      </span>
      <span className="mt-auto mb-[5px] border-x-2 border-t-[3px] border-x-transparent border-t-[#444]" />
    </div>
  );
}

function HorizontalScrollbar() {
  return (
    <div className="flex h-2.5 shrink-0 items-center bg-[#ececec] pr-[15px] pl-1">
      <span className="border-y-2 border-r-[3px] border-y-transparent border-r-[#333]" />
      <div className="flex flex-1 pl-[13%]">
        <span className="flex h-[9px] w-[80%] items-center justify-center gap-px rounded-xs border border-[#999] bg-linear-to-b from-[#f0f0f0] to-[#bdbdbd]">
          <span className="h-1 w-px bg-[#777]" />
          <span className="h-1 w-px bg-[#777]" />
          <span className="h-1 w-px bg-[#777]" />
        </span>
      </div>
      <span className="border-y-2 border-l-[3px] border-y-transparent border-l-[#333]" />
    </div>
  );
}

const ARDUINO = (
  <g>
    <circle cx="10" cy="10" r="9.5" fill="#0f979d" />
    <g fill="none" stroke="#fff" strokeWidth="1.5">
      <circle cx="6.7" cy="10" r="2.8" />
      <circle cx="13.3" cy="10" r="2.8" />
    </g>
    <path d="M5.700 10h2M12.300 10h2M13.300 9v2" stroke="#fff" strokeWidth=".6" />
  </g>
);

// 20 x 20 taskbar pictures; open windows get a glass frame
const TASKS = [
  {
    name: 'Explorer',
    open: true,
    art: (
      <g>
        <path d="M1 3h5l1-1h11v14H1z" fill="#e9c96a" />
        <path d="M2 2h4v3H2z" fill="#4aa05a" />
        <path d="M7 1.500h4v3H7z" fill="#f5f5f0" />
        <path d="M12 2h5v3h-5z" fill="#e9f0e0" />
        <path d="M1 5h18v11H1z" fill="#f6e5a4" />
        <path d="M4 18v-4q0-2 2-2h8q2 0 2 2v4h-2.500v-3h-7v3z" fill="#9fd4ee" stroke="#4e9bc4" strokeWidth=".7" />
      </g>
    ),
  },
  {
    name: 'Chrome',
    open: true,
    art: (
      <g>
        <circle cx="10" cy="10" r="9" fill="#f4c724" />
        <path d="M10 10L2.200 5.500A9 9 0 0117.800 5.500L18.500 7H10z" fill="#dc4437" />
        <path d="M2.200 5.500A9 9 0 009.500 19L13.500 12 7 11z" fill="#2da04e" />
        <circle cx="10" cy="10" r="4.3" fill="#fff" />
        <circle cx="10" cy="10" r="3.3" fill="#4285e0" />
      </g>
    ),
  },
  {
    name: 'Blocks',
    art: (
      <g>
        <path d="M1 1l8 1v8l-8-1z" fill="#c9202a" />
        <path d="M11 2l7-1 1 8-8 1z" fill="#2f9c3e" />
        <path d="M2 11l7 1v7l-6-1z" fill="#d7d33c" />
        <path d="M11 12l7-2 1 7-7 2z" fill="#5a34c4" />
        <path d="M9 2l2-1v8L9 10zM1 9l8 1v2l-7-1z" fill="#3a1f1f" />
      </g>
    ),
  },
  {
    name: 'Firefox',
    art: (
      <g>
        <circle cx="10.5" cy="9" r="8" fill="#2a5ea8" />
        <path d="M8 4q4-3 7 0l-3 3-4 1z" fill="#6db4e4" />
        <path d="M2 3q1 1.500 2.500 1.500L8 6q-2 1-1.500 2.500 3 1 2 2.500l-2.500 1q4 4 8 0 3-3 2-8 4 5 2 10-3 6-9 5.500Q2 18.500 1 12 .5 7 2 3z" fill="#e8741e" />
        <path d="M16 4q4 5 2 10-2 4-6 5 5-5 4-15z" fill="#f6bb3a" />
      </g>
    ),
  },
  { name: 'Arduino', art: ARDUINO },
  { name: 'Arduino', art: ARDUINO },
  {
    name: 'PDF',
    art: (
      <g>
        <path d="M1 1h14l3 2v15H1z" fill="#e8eef6" />
        <path d="M2 2h12v4H2z" fill="#7fa8dc" />
        <path d="M3 10q4-6 6-3t6-2M4 13q3-3 6-2" fill="none" stroke="#2e67b0" strokeWidth="1.500" />
        <path d="M8 12h12v7H8z" fill="#d8402c" />
        <text x="9" y="17.5" fontSize="5" fontWeight="700" fill="#fff" fontFamily="Liberation Sans">PDF</text>
      </g>
    ),
  },
  {
    name: 'Fish',
    art: (
      <g>
        <path d="M1 8l6-5 5 2 7-1-2 6-3 6-5 2-6-4z" fill="#b59a2a" />
        <path d="M7 3l5 2-1 5-4 1-3-3zM15 9l3-1-4 8-2-2z" fill="#5d5a1c" />
        <circle cx="5" cy="11" r="2.5" fill="#e3cf58" />
        <circle cx="13" cy="8" r="2.5" fill="#e8d15a" />
      </g>
    ),
  },
  {
    name: 'VMware',
    art: (
      <g fill="#f5dc27" stroke="#b89c10" strokeWidth=".4">
        <path d="M1 1h8v3H6l3 3-2 2-3-3v3H1zM12 1h7v8h-3V6l-2.500 2.500L11.500 6.500 14 4h-2zM1 11h3v3l2.500-2.500L9 13.500 6 16h2v3H1zM11.500 13l2-2 3 3v-3H20v9h-9v-3h3z" />
        <path d="M7.500 7.500h5v5h-5z" fill="#2f75b8" />
      </g>
    ),
  },
  {
    name: 'VLC',
    open: true,
    art: (
      <g>
        <path d="M9 1h2l5 14H4z" fill="#ef7d18" />
        <path d="M7.800 4.500h4.400l1 3H6.800zM5.900 10h8.200l1 3H4.900z" fill="#f5f1ec" />
        <path d="M2 15h16l1 4H1z" fill="#e26d10" />
      </g>
    ),
  },
  {
    name: 'Notepad',
    open: true,
    art: (
      <g>
        <path d="M6 2l13 1-4 14-13-2z" fill="#8fd3d8" />
        <path d="M6 2l13 1-.5 2-13-1.500z" fill="#d9e8ea" />
        <path d="M2 15l13 2 4-12v3l-3 11-13-2z" fill="#f0f7f7" />
        <path d="M8 6l6 8-8-1z" fill="#bfe9ea" />
      </g>
    ),
  },
  {
    name: 'Eagle',
    open: true,
    active: true,
    art: (
      <g>
        <path d="M0 0h20v20H0z" fill="#fff" />
        <path d="M11 1.500A5.500 5.500 0 109 12.500Q5.500 9 8 6l4-.5q-2-1-1-4z" fill="#c5203a" />
        <text x="8" y="13" fontSize="7" fill="#444" fontFamily="Liberation Sans">CS</text>
        <text x="1.5" y="19" fontSize="5" fontWeight="700" fill="#222" fontFamily="Liberation Sans">EAGLE</text>
      </g>
    ),
  },
  {
    name: 'Paint',
    open: true,
    art: (
      <g>
        <path d="M1 11Q2 3 11 3t8 6q-1 4-4 4-3-1-3 2 0 3-5 3-6-1-6-7z" fill="#dfe9f0" stroke="#9fb4c4" strokeWidth=".6" />
        <circle cx="5" cy="9" r="1.6" fill="#3a9a3e" />
        <circle cx="9" cy="6" r="1.6" fill="#e2562c" />
        <circle cx="14" cy="7" r="1.5" fill="#e8c52c" />
        <circle cx="5.5" cy="14" r="1.6" fill="#3272c8" />
        <path d="M17 1l2 1-6 14-2 3v-4z" fill="#d08a35" />
      </g>
    ),
  },
];

function Taskbar() {
  return (
    <footer className="flex h-[25px] shrink-0 items-stretch border-t border-[#4b7ba3] bg-[linear-gradient(90deg,#2b6ea6_0%,#3d8cc7_12%,#3b90cd_45%,#2f7fc2_55%,#1c5ba3_65%,#164f93_76%,#0f3a6c_84%,#12365f_100%)] text-white">
      <button type="button" aria-label="Start" className="flex w-9 items-center justify-center">
        <svg viewBox="0 0 24 24" className="size-6">
          <circle cx="12" cy="12" r="11" fill="#2a6494" stroke="#8fc0e0" strokeWidth="1" />
          <path d="M2 11a10 9 0 0120 0q-10 4-20 0z" fill="#86b4d4" opacity=".7" />
          <path d="M6 8q3-2 5.500-.5L10.500 12Q8 10.500 5 12z" fill="#e8632c" />
          <path d="M12.500 8q3 1.500 6 0l-1 4.500q-3 1.500-6 0z" fill="#8cc63e" />
          <path d="M4.700 13q3-1.500 5.500 0L9 17.500Q6.500 16 3.800 17.500z" fill="#3fa9e8" />
          <path d="M11.200 13.500q3 1.500 6 0L16 18q-3 1.500-6 0z" fill="#f8cf3a" />
        </svg>
      </button>
      <div className="flex w-[63%]">
        {TASKS.map((task, i) => (
          <button
            key={i}
            type="button"
            aria-label={task.name}
            className={`mx-px flex flex-1 items-center justify-center ${
              task.active
                ? 'rounded-xs border border-white/60 bg-white/70'
                : task.open
                ? 'rounded-xs border border-white/50 bg-linear-to-br from-white/45 to-white/10'
                : 'border border-transparent'
            }`}
          >
            <svg viewBox="0 0 20 20" className="size-5">{task.art}</svg>
          </button>
        ))}
      </div>
      <svg viewBox="0 0 60 24" className="ml-4 h-6 w-[60px]" preserveAspectRatio="none" aria-hidden="true">
        <path d="M12 0h9l24 24H34z" fill="#8cc4ee" opacity=".4" />
        <path d="M15 0h4l22 24h-5z" fill="#b5dcf8" opacity=".7" />
      </svg>
      <div className="ml-auto flex items-center">
        <span className="mr-[9px] border-x-2 border-b-[3px] border-x-transparent border-b-white" />
        <div className="flex items-center gap-[5px]">
          <svg viewBox="0 0 10 10" className="size-2.5" aria-label="Dropbox">
            <path d="M2.500 1L5 2.500 2.500 4 0 2.500zM7.500 1L10 2.500 7.500 4 5 2.500zM2.500 4.500L5 6 2.500 7.500 0 6zM5 7l2 1.200L5 9.500 3 8.200z" fill="#fff" />
            <circle cx="7.5" cy="7.2" r="2.5" fill="#3fb24a" />
          </svg>
          <svg viewBox="0 0 10 10" className="size-2.5" aria-label="Action Center">
            <path d="M1 .5v9M1 1h4l1 1h3v4H5L4 5H1z" fill="#fff" stroke="#fff" />
            <path d="M6.500 3.500L10 10H3z" fill="#f0c22c" />
            <path d="M6.200 5.500h.8v2h-.8zM6.200 8.200h.8V9h-.8z" fill="#333" />
          </svg>
          <svg viewBox="0 0 10 10" className="size-2.5" aria-label="Power">
            <path d="M2 2h6v8H2zM3.500.5h3V2h-3z" fill="#e8eef4" />
            <path d="M5 4h3v2L6 8H4.500z" fill="#56708c" />
          </svg>
          <svg viewBox="0 0 10 10" className="size-2.5" aria-label="Network">
            <path d="M0 7.500h1.400V9H0zM2.100 6h1.400v3H2.100zM4.200 4.500h1.400V9H4.200zM6.300 3h1.400v6H6.300zM8.400 1h1.400v8H8.400z" fill="#e8eef4" />
          </svg>
          <svg viewBox="0 0 10 10" className="size-2.5" aria-label="Volume">
            <path d="M0 3.500h2L5 1v8L2 6.500H0z" fill="#fff" />
            <path d="M6.300 3.500q1 1.500 0 3M7.800 2q2 3 0 6" fill="none" stroke="#cfdce8" strokeWidth=".8" />
          </svg>
        </div>
        <div className="ml-3 w-[30px] text-center text-[7px] leading-[10px] whitespace-nowrap">
          <p>9:17 PM</p>
          <p>3/6/2015</p>
        </div>
        <button type="button" aria-label="Show desktop" className="ml-[7px] h-6 w-2.5 border-l border-[#5c7da0] bg-[#2b5480]" />
      </div>
    </footer>
  );
}

export default function App() {
  return (
    <div className="flex h-screen w-full flex-col overflow-hidden bg-[#f0f0f0] font-['Open_Sans','Noto_Sans',sans-serif] text-[7px] text-[#222]">
      <TitleBar />
      <MenuBar />
      <MainToolbar />
      <ParameterToolbar />
      <div className="flex min-h-0 flex-1">
        <Palette />
        <main className="flex min-w-0 flex-1 flex-col border-l border-[#aaa]">
          <div className="flex h-3 shrink-0 items-stretch bg-white">
            <output className="w-20 border border-[#999] bg-[#f0f0f0] px-px text-[7px] leading-[10px] whitespace-nowrap">0.05 inch (1.10 2.95)</output>
            <span className="ml-px w-2.5 border-l border-[#999] bg-[#f0f0f0]" />
            <input aria-label="Command" className="min-w-0 flex-1 bg-white outline-none" />
            <button type="button" aria-label="History" className="flex w-2.5 items-center justify-center">
              <span className="border-x-2 border-t-[3px] border-x-transparent border-t-black" />
            </button>
          </div>
          <div className="flex min-h-0 flex-1">
            <div className="relative min-w-0 flex-1 bg-black">
              <Board />
              <GridDialog />
              <DrcDialog />
            </div>
            <VerticalScrollbar />
          </div>
          <HorizontalScrollbar />
        </main>
      </div>
      <div className="flex h-[18px] shrink-0 items-center justify-end border-t border-[#d5d5d5] bg-[#efefef] pr-3">
        <span className="flex h-3.5 w-[15px] items-center justify-center border-x border-[#dcdcdc]">
          <svg viewBox="0 0 10 12" className="h-3 w-2.5" aria-label="Consistent">
            <path d="M6 0L0 7h4.500L3 12l7-7H5.500L8 1z" fill="#76bd2c" />
          </svg>
        </span>
      </div>
      <Taskbar />
    </div>
  );
}
